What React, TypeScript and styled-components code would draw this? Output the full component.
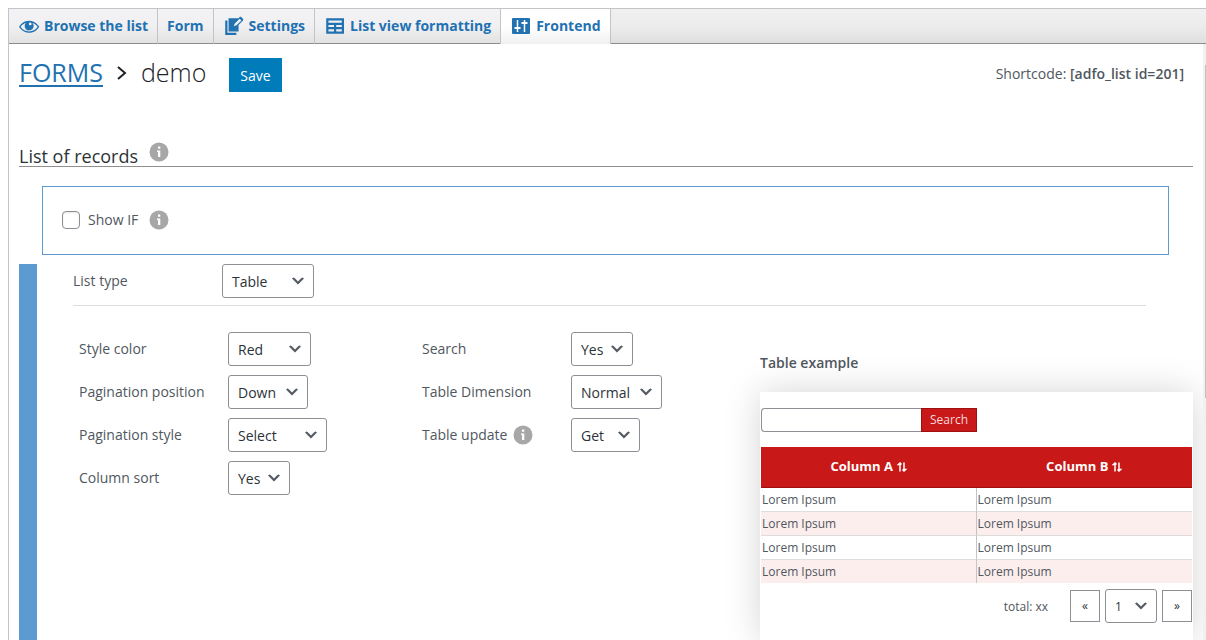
import React from 'react';
import styled, { createGlobalStyle, css } from 'styled-components';

const colors = {
  link: '#2271b1',
  primary: '#007cba',
  text: '#50575e',
  dark: '#2c3338',
  field: '#8c8f94',
  accent: '#5b9bd1',
  red: '#c91818',
  redDark: '#9c1012',
};

const GlobalStyle = createGlobalStyle`
  *, *::before, *::after { box-sizing: border-box; }
  body {
    margin: 0;
    background: #fff;
    color: ${colors.text};
    font: 14px/20px 'Open Sans', 'Noto Sans', sans-serif;
  }
  button, input, select { font: inherit; color: inherit; margin: 0; }
`;

const Page = styled.div`
  min-height: 100vh;
  padding: 8px 0 0 8px;
  display: flex;
`;

const Frame = styled.div`
  flex: 1;
  min-width: 0;
  display: flex;
  flex-direction: column;
  border: solid #c3c4c7;
  border-width: 1px 0 0 1px;
`;

const TabBar = styled.nav`
  display: flex;
  height: 35px;
  background: linear-gradient(#f0f0f0, #ececec 50%, #dedede);
  box-shadow: inset 0 -1px #8c8c8c;
`;

const Tab = styled.a<{ $active?: boolean }>`
  display: flex;
  align-items: center;
  gap: 6px;
  padding: 0 9px 1px;
  border-right: 1px solid #c3c4c7;
  background: linear-gradient(#f3f3f6, #f0f0f2 50%, #e1e1e1);
  box-shadow: inset 0 -1px #8c8c8c;
  color: ${colors.link};
  font-weight: 700;
  white-space: nowrap;
  text-decoration: none;
  ${(p) => p.$active && css`
    background: linear-gradient(#fff 50%, #f0f0f0);
    box-shadow: none;
  `}
`;

const Body = styled.div`
  flex: 1;
  display: flex;
`;

const Content = styled.main`
  flex: 1;
  min-width: 0;
  display: flex;
  flex-direction: column;
  padding: 14px 10px 0;
`;

const ScrollTrack = styled.div`
  width: 3px;
  padding: 21px 0 0 2px;
  background: #f1f1f1;
`;

const ScrollThumb = styled.div`
  height: 333px;
  background: #c1c1c1;
`;

const TitleRow = styled.header`
  display: flex;
  align-items: center;
  height: 34px;
`;

const Title = styled.h1`
  display: flex;
  align-items: center;
  gap: 13px;
  margin: 0 23px 6px 0;
  color: #1d2327;
  font-size: 25px;
  line-height: 30px;
  font-weight: 300;
`;

const TitleLink = styled.a`
  color: ${colors.link};
  font-weight: 400;
  text-decoration: underline;
  text-decoration-thickness: 2px;
  text-underline-offset: 3px;
`;

const SaveButton = styled.button`
  height: 34px;
  padding: 2px 11px 0;
  border: 0;
  background: ${colors.primary};
  color: #fff;
`;

const Shortcode = styled.div`
  margin: 0 9px 2px auto;
  b { font-weight: 600; }
`;

const SectionTitle = styled.h2`
  display: flex;
  align-items: flex-end;
  gap: 11px;
  height: 32px;
  margin: 43px 0 0;
  border-bottom: 1px solid #8f8f8f;
  color: ${colors.dark};
  font-size: 18px;
  line-height: 20px;
  font-weight: 400;
  svg { margin-bottom: 4px; }
`;

const Condition = styled.div`
  display: flex;
  align-items: center;
  height: 69px;
  margin: 19px 24px 0 23px;
  padding: 0 19px 1px;
  border: 1px solid ${colors.accent};
`;

const CheckLabel = styled.label`
  display: flex;
  align-items: center;
  gap: 8px;
  margin-right: 11px;
`;

const Checkbox = styled.input`
  appearance: none;
  width: 18px;
  height: 18px;
  border: 1px solid ${colors.field};
  border-radius: 4px;
  background: #fff;
  box-shadow: inset 0 1px 2px rgba(0, 0, 0, 0.1);
`;

const Panel = styled.section`
  flex: 1;
  margin-top: 9px;
  border-left: 18px solid ${colors.accent};
  padding-left: 36px;
`;

const TypeRow = styled.div`
  margin-right: 47px;
  padding-bottom: 7px;
  border-bottom: 1px solid #dcdcde;
`;

const Columns = styled.div`
  display: grid;
  grid-template-columns: 343fr 338fr 433fr;
  padding: 26px 0 0 6px;
`;

const Fields = styled.div`
  display: flex;
  flex-direction: column;
  gap: 9px;
`;

const Field = styled.div`
  display: flex;
  align-items: center;
  height: 34px;
`;

const FieldLabel = styled.label`
  display: flex;
  align-items: center;
  gap: 6px;
  width: 149px;
  white-space: nowrap;
`;

const SelectWrap = styled.span<{ $width: number }>`
  display: grid;
  width: ${(p) => p.$width}px;
  height: 34px;
  align-items: center;
  > * { grid-area: 1 / 1; }
  > svg { justify-self: end; margin-right: 8px; pointer-events: none; }
`;

const NativeSelect = styled.select`
  appearance: none;
  width: 100%;
  height: 100%;
  padding: 1px 0 0 9px;
  border: 1px solid ${colors.field};
  border-radius: 3px;
  background: #fff;
  color: ${colors.dark};
`;

const Preview = styled.div`
  display: flex;
  flex-direction: column;
`;

const PreviewTitle = styled.h3`
  margin: 21px 0 19px;
  font-size: 14px;
  line-height: 20px;
  font-weight: 550;
`;

const Card = styled.div`
  flex: 1;
  min-height: 249px;
  padding: 16px 1px;
  background: #fff;
  box-shadow: 0 0 34px rgba(0, 0, 0, 0.17);
  font-size: 12px;
  clip-path: inset(-60px -10px 0 -60px);
`;

const SearchForm = styled.form`
  display: flex;
  height: 24px;
  margin-bottom: 15px;
`;

const SearchInput = styled.input`
  width: 160px;
  border: 1px solid ${colors.field};
  border-right: 0;
  border-radius: 4px 0 0 4px;
  background: #fff;
`;

const SearchButton = styled.button`
  width: 56px;
  padding: 0;
  border: 1px solid ${colors.redDark};
  background: ${colors.red};
  color: #f6dada;
`;

const DataTable = styled.table`
  width: 100%;
  table-layout: fixed;
  border-collapse: separate;
  border-spacing: 0;
  th {
    height: 41px;
    padding: 0 0 2px;
    border-bottom: 1px solid ${colors.redDark};
    background: ${colors.red};
    color: #fff;
    font-size: 13px;
    font-weight: 700;
  }
  th svg { margin-left: 4px; vertical-align: -1px; }
  td {
    height: 24px;
    padding: 0 1px;
    line-height: 20px;
    border-bottom: 1px solid #e0dcde;
  }
  td:first-child { border-right: 1px solid #c3c4c7; }
  tbody tr:nth-child(even) td { background: #fdeeee; }
  tbody tr:last-child td { height: 23px; border-bottom: 0; }
`;

const Pager = styled.div`
  display: flex;
  align-items: center;
  justify-content: flex-end;
  gap: 5px;
  margin-top: 6px;
`;

const Total = styled.span`
  margin-right: 17px;
  padding-top: 2px;
`;

const PageButton = styled.button`
  width: 30px;
  height: 32px;
  padding: 0;
  border: 1px solid ${colors.field};
  background: #fff;
  color: ${colors.dark};
`;

const ICONS = {
  eye: 'M18.3 9.5C15 4.9 8.5 3.8 3.9 7.2c-1.2.9-2.2 2.1-3 3.4.2.4.5.8.8 1.2 3.3 4.6 9.6 5.6 14.2 2.4.9-.7 1.7-1.4 2.4-2.4.3-.4.5-.8.8-1.2-.3-.4-.5-.8-.8-1.1zm-8.2-2.3c.5-.5 1.3-.5 1.8 0s.5 1.3 0 1.8-1.3.5-1.8 0-.5-1.3 0-1.8zm-.1 7.7c-3.1 0-6-1.6-7.7-4.2C3.5 9 5.1 7.8 7 7.2c-.7.8-1 1.7-1 2.7 0 2.2 1.7 4.1 4 4.1 2.2 0 4.1-1.7 4.1-4v-.1c0-1-.4-2-1.1-2.7 1.9.6 3.5 1.8 4.7 3.5-1.7 2.6-4.6 4.2-7.7 4.2z',
  edit: 'M4 5H2v13h10v-2H4V5zm13.9-1.6l-1.3-1.3c-.4-.4-1.1-.5-1.6-.1l-1 1H5v12h9V9l4-4c.4-.5.3-1.2-.1-1.6zm-5.7 6l-2.5.9.9-2.5L15 3.4 16.6 5l-4.4 4.4z',
  table: 'M18 17V3H2v14h16zM16 7H4V5h12v2zm-7 4H4V9h5v2zm7 0h-5V9h5v2zm-7 4H4v-2h5v2zm7 0h-5v-2h5v2z',
};

const Icon = ({ name }: { name: keyof typeof ICONS }) => (
  <svg width="20" height="20" viewBox="0 1 18 18" fill="currentColor" fillRule="evenodd" overflow="visible" aria-hidden="true">
    <path d={ICONS[name]} />
  </svg>
);

const SlidersIcon = () => (
  <svg width="20" height="20" viewBox="0 0 20 20" aria-hidden="true">
    <rect x="2" y="2" width="18" height="16" rx="1" fill="currentColor" />
    <path d="M7.500 4v12M14.500 4v12" fill="none" stroke="#fff" strokeWidth="1.500" />
    <path d="M4.500 12h6M11.500 7h6" fill="none" stroke="#fff" strokeWidth="2" />
  </svg>
);

const Info = () => (
  <svg width="20" height="20" viewBox="0 0 20 20" role="img" aria-label="Info">
    <circle cx="10" cy="10" r="9.500" fill="#a7a7a7" />
    <path d="M9 4.500h2.300v2.300H9zM8 8.500h3.300V15H9v-5H8z" fill="#fff" />
  </svg>
);

const Chevron = () => (
  <svg width="16" height="16" viewBox="0 0 20 20" aria-hidden="true">
    <path d="M5 6l5 5 5-5 2 1-7 7-7-7 2-1z" fill="#50575e" stroke="#50575e" strokeWidth="0.800" />
  </svg>
);

const SortMark = () => (
  <svg width="10" height="10" viewBox="0 0 10 10" aria-hidden="true">
    <path d="M3 9.500V1.500M0.500 3.200L3 1l1.500 1.500M7 0.500v8M5.500 7.500L7 9l2.500-2.200" fill="none" stroke="#fff" strokeWidth="1.500" />
  </svg>
);

type SelectProps = { id?: string; label?: string; value: string; width: number };

const Select = ({ id, label, value, width }: SelectProps) => (
  <SelectWrap $width={width}>
    <NativeSelect id={id} aria-label={label} defaultValue={value}>
      <option>{value}</option>
    </NativeSelect>
    <Chevron />
  </SelectWrap>
);

type FieldData = { id: string; label: string; value: string; width: number; info?: boolean };

const SelectField = ({ id, label, value, width, info }: FieldData) => (
  <Field>
    <FieldLabel htmlFor={id}>
      {label}
      {info && <Info />}
    </FieldLabel>
    <Select id={id} value={value} width={width} />
  </Field>
);

const styleFields: FieldData[] = [
  { id: 'color', label: 'Style color', value: 'Red', width: 83 },
  { id: 'position', label: 'Pagination position', value: 'Down', width: 80 },
  { id: 'pagination', label: 'Pagination style', value: 'Select', width: 99 },
  { id: 'sort', label: 'Column sort', value: 'Yes', width: 62 },
];

const tableFields: FieldData[] = [
  { id: 'search', label: 'Search', value: 'Yes', width: 62 },
  { id: 'dimension', label: 'Table Dimension', value: 'Normal', width: 91 },
  { id: 'update', label: 'Table update', value: 'Get', width: 69, info: true },
];

export default function App() {
  return (
    <Page>
      <GlobalStyle />
      <Frame>
        <TabBar>
          <Tab href="#browse"><Icon name="eye" />Browse the list</Tab>
          <Tab href="#form">Form</Tab>
          <Tab href="#settings"><Icon name="edit" />Settings</Tab>
          <Tab href="#formatting"><Icon name="table" />List view formatting</Tab>
          <Tab href="#frontend" $active><SlidersIcon />Frontend</Tab>
        </TabBar>
        <Body>
          <Content>
            <TitleRow>
              <Title>
                <TitleLink href="#forms">FORMS</TitleLink>
                <svg width="12" height="18" viewBox="0 0 12 18" aria-hidden="true">
                  <path d="M2 4l7 6-7 6" fill="none" stroke="#1d2327" strokeWidth="2" />
                </svg>
                <span>demo</span>
              </Title>
              <SaveButton>Save</SaveButton>
              <Shortcode>Shortcode: <b>[adfo_list id=201]</b></Shortcode>
            </TitleRow>
            <SectionTitle>List of records<Info /></SectionTitle>
            <Condition>
              <CheckLabel><Checkbox type="checkbox" />Show IF</CheckLabel>
              <Info />
            </Condition>
            <Panel>
              <TypeRow>
                <SelectField id="type" label="List type" value="Table" width={92} />
              </TypeRow>
              <Columns>
                <Fields>{styleFields.map((f) => <SelectField key={f.id} {...f} />)}</Fields>
                <Fields>{tableFields.map((f) => <SelectField key={f.id} {...f} />)}</Fields>
                <Preview>
                  <PreviewTitle>Table example</PreviewTitle>
                  <Card>
                    <SearchForm>
                      <SearchInput type="text" aria-label="Search records" />
                      <SearchButton type="button">Search</SearchButton>
                    </SearchForm>
                    <DataTable>
                      <thead>
                        <tr>
                          <th>Column A<SortMark /></th>
                          <th>Column B<SortMark /></th>
                        </tr>
                      </thead>
                      <tbody>
                        {[1, 2, 3, 4].map((row) => (
                          <tr key={row}>
                            <td>Lorem Ipsum</td>
                            <td>Lorem Ipsum</td>
                          </tr>
                        ))}
                      </tbody>
                    </DataTable>
                    <Pager>
                      <Total>total: xx</Total>
                      <PageButton aria-label="Previous page">«</PageButton>
                      <Select label="Page" value="1" width={52} />
                      <PageButton aria-label="Next page">»</PageButton>
                    </Pager>
                  </Card>
                </Preview>
              </Columns>
            </Panel>
          </Content>
          <ScrollTrack><ScrollThumb /></ScrollTrack>
        </Body>
      </Frame>
    </Page>
  );
}
